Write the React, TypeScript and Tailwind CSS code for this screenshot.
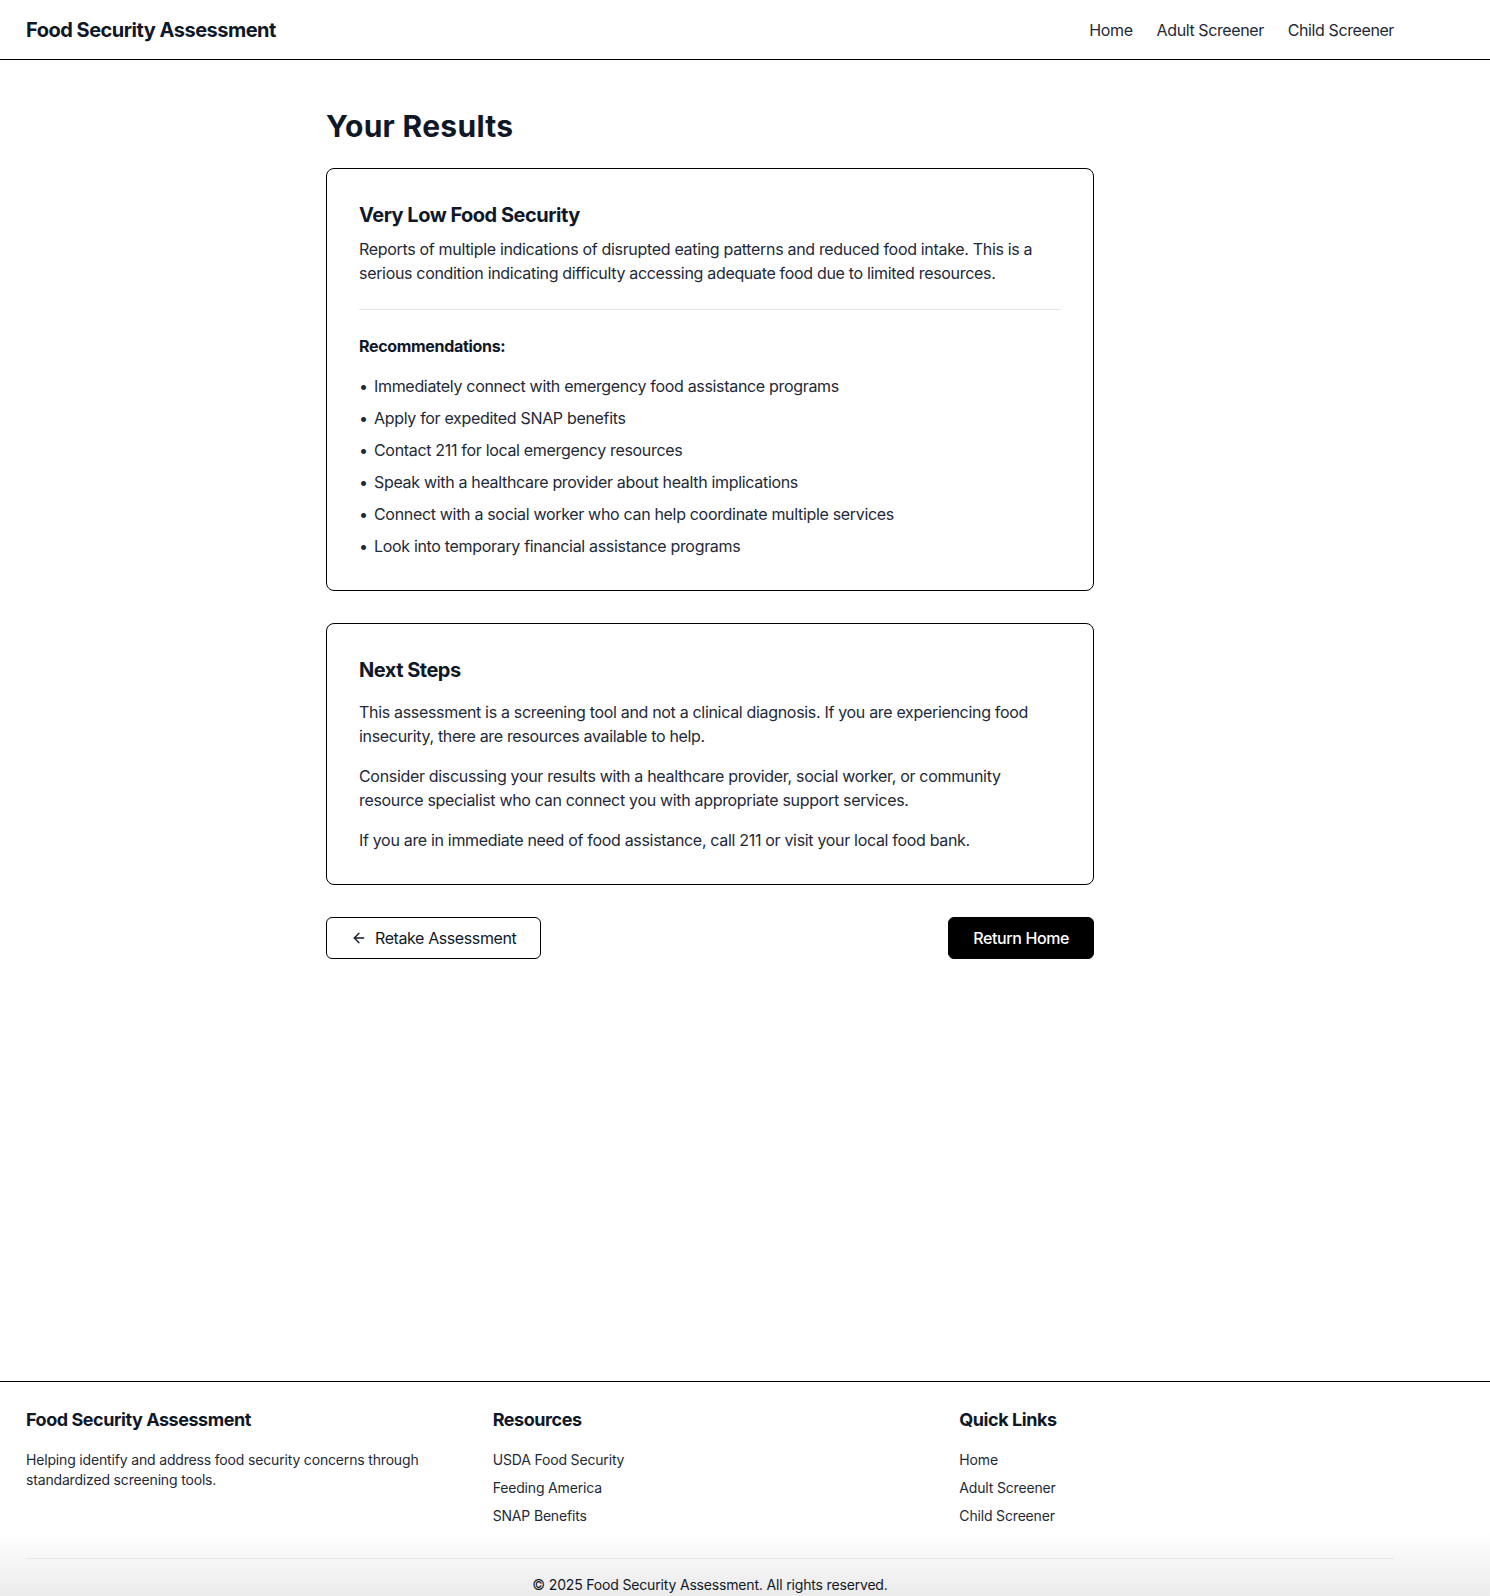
import { ArrowLeft } from "lucide-react";

const recommendations = [
  "Immediately connect with emergency food assistance programs",
  "Apply for expedited SNAP benefits",
  "Contact 211 for local emergency resources",
  "Speak with a healthcare provider about health implications",
  "Connect with a social worker who can help coordinate multiple services",
  "Look into temporary financial assistance programs",
];

const resources = ["USDA Food Security", "Feeding America", "SNAP Benefits"];
const quickLinks = ["Home", "Adult Screener", "Child Screener"];

export default function App() {
  return (
    <div className="flex min-h-screen flex-col bg-white font-['Inter','Noto_Sans',sans-serif] tracking-[-0.02em] text-gray-800">
      {/* header */}
      <header className="border-b border-black">
        <div className="flex h-[59px] w-[1420px] items-center justify-between px-[26px]">
          <span className="text-xl font-bold tracking-tight text-gray-900">Food Security Assessment</span>
          <nav className="flex items-center gap-6 text-base tracking-tight text-gray-800">
            <a href="#">Home</a>
            <a href="#">Adult Screener</a>
            <a href="#">Child Screener</a>
          </nav>
        </div>
      </header>

      {/* main */}
      <main className="flex-1">
        <div className="w-[1420px] px-[26px]">
          <div className="mx-auto max-w-3xl py-12">
            <h1 className="mb-6 text-3xl font-bold tracking-[0.01em] text-gray-900">Your Results</h1>

            <div className="space-y-8">
              <section className="rounded-lg border border-black p-8">
                <h2 className="mb-2 text-xl font-bold tracking-tight text-gray-900">Very Low Food Security</h2>
                <p className="text-base text-gray-800">
                  Reports of multiple indications of disrupted eating patterns and reduced food intake. This is a
                  serious condition indicating difficulty accessing adequate food due to limited resources.
                </p>
                <div className="mt-6 border-t border-gray-200 pt-6">
                  <h3 className="mb-4 text-base font-bold text-gray-900">Recommendations:</h3>
                  <ul className="space-y-2 text-base text-gray-800">
                    {recommendations.map((r) => (
                      <li key={r} className="flex">
                        <span className="mr-2 w-[7px] text-center">•</span>
                        <span>{r}</span>
                      </li>
                    ))}
                  </ul>
                </div>
              </section>

              <section className="rounded-lg border border-black p-8">
                <h2 className="mb-4 text-xl font-bold tracking-tight text-gray-900">Next Steps</h2>
                <div className="space-y-4 text-base text-gray-800">
                  <p>
                    This assessment is a screening tool and not a clinical diagnosis. If you are experiencing food
                    insecurity, there are resources available to help.
                  </p>
                  <p>
                    Consider discussing your results with a healthcare provider, social worker, or community
                    resource specialist who can connect you with appropriate support services.
                  </p>
                  <p>If you are in immediate need of food assistance, call 211 or visit your local food bank.</p>
                </div>
              </section>
            </div>

            <div className="mt-8 flex items-center justify-between">
              <button className="flex items-center gap-2 rounded-md border border-black bg-white px-6 py-2 text-base tracking-tight text-gray-900">
                <ArrowLeft size={16} strokeWidth={2} />
                Retake Assessment
              </button>
              <button className="rounded-md border border-black bg-black px-6 py-2 text-base font-medium tracking-tight text-white">
                Return Home
              </button>
            </div>
          </div>
        </div>
      </main>

      {/* footer */}
      <footer className="border-t border-black bg-linear-to-b from-white from-70% to-[#ebebeb]">
        <div className="w-[1420px] px-[26px] pt-6 pb-px">
          <div className="grid grid-cols-3 gap-8">
            <div>
              <h4 className="mb-4 text-lg font-bold tracking-tight text-gray-900">Food Security Assessment</h4>
              <p className="text-sm tracking-[-0.012em] text-gray-800">
                Helping identify and address food security concerns through standardized screening tools.
              </p>
            </div>
            <div>
              <h4 className="mb-4 text-lg font-bold tracking-tight text-gray-900">Resources</h4>
              <ul className="space-y-2 text-sm tracking-[-0.012em] text-gray-800">
                {resources.map((r) => (
                  <li key={r}>
                    <a href="#">{r}</a>
                  </li>
                ))}
              </ul>
            </div>
            <div>
              <h4 className="mb-4 text-lg font-bold tracking-tight text-gray-900">Quick Links</h4>
              <ul className="space-y-2 text-sm tracking-[-0.012em] text-gray-800">
                {quickLinks.map((r) => (
                  <li key={r}>
                    <a href="#">{r}</a>
                  </li>
                ))}
              </ul>
            </div>
          </div>
          <div className="mt-8 border-t border-gray-200 pt-4 text-center text-sm tracking-[-0.012em] text-gray-900">
            © 2025 Food Security Assessment. All rights reserved.
          </div>
        </div>
      </footer>
    </div>
  );
}
